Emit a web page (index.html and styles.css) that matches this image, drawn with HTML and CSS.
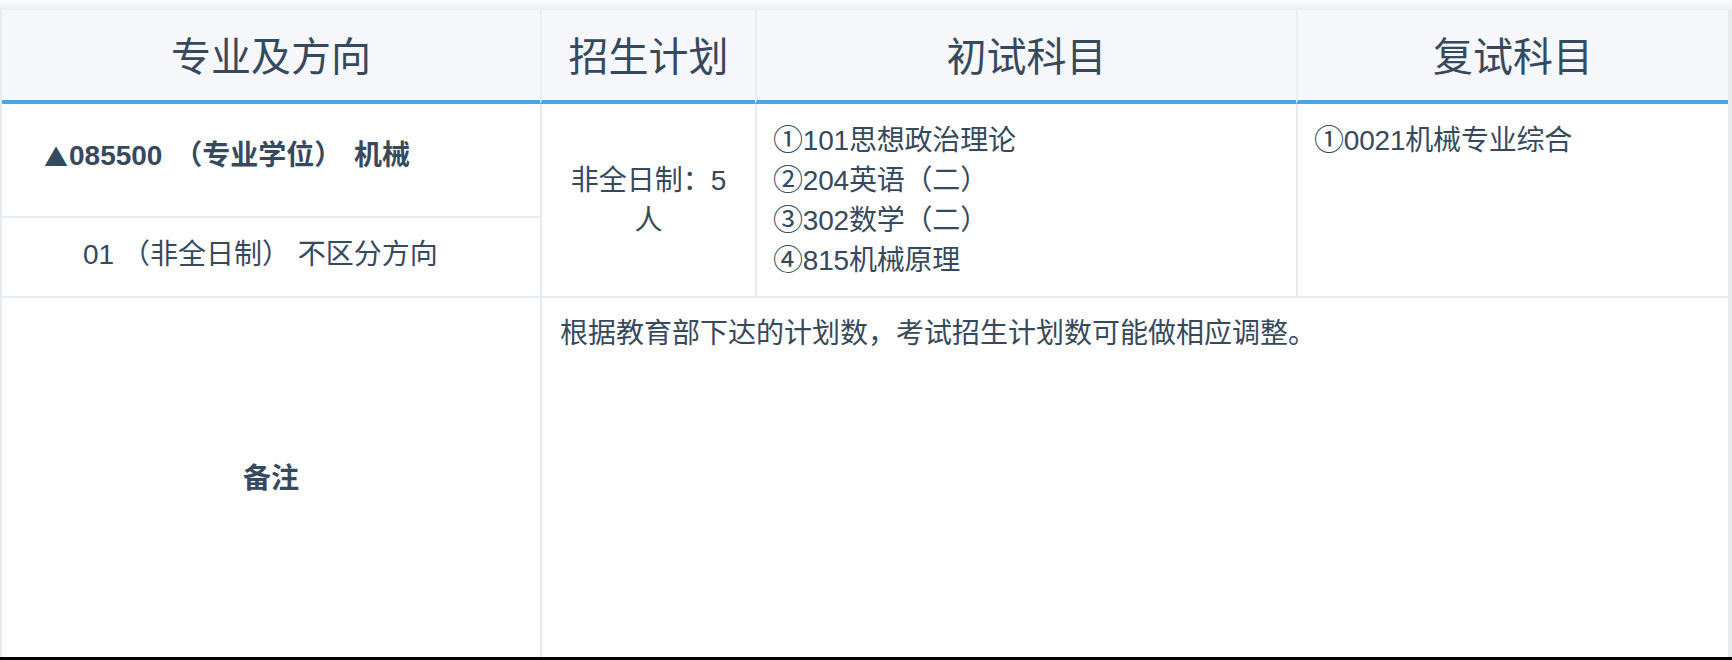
FILE: index.html
```html
<!DOCTYPE html>
<html lang="zh-CN">
<head>
<meta charset="utf-8">
<title>招生专业目录</title>
<link rel="stylesheet" href="styles.css">
</head>
<body>
<div class="page">
  <div class="top-shadow"></div>
  <div class="table">
    <div class="th">专业及方向</div>
    <div class="th">招生计划</div>
    <div class="th">初试科目</div>
    <div class="th">复试科目</div>

    <div class="td major">
      <div class="major-name"><span class="tri">▲</span>085500 （专业学位） 机械</div>
      <div class="major-dir">01 （非全日制） 不区分方向</div>
    </div>
    <div class="td plan">非全日制：5人</div>
    <div class="td subjects">
      <div><span class="circ">①</span>101思想政治理论</div>
      <div><span class="circ">②</span>204英语（二）</div>
      <div><span class="circ">③</span>302数学（二）</div>
      <div><span class="circ">④</span>815机械原理</div>
    </div>
    <div class="td subjects">
      <div><span class="circ">①</span>0021机械专业综合</div>
    </div>

    <div class="td note-label">备注</div>
    <div class="td note-text">根据教育部下达的计划数，考试招生计划数可能做相应调整。</div>
  </div>
  <div class="bottom-edge"></div>
</div>
</body>
</html>
```

FILE: styles.css
```css
html, body {
  margin: 0;
  padding: 0;
  background: #ffffff;
}

.page {
  width: 1732px;
  height: 660px;
  display: flex;
  flex-direction: column;
  font-family: "Liberation Sans", "Noto Sans CJK SC", sans-serif;
  color: #36495d;
  overflow: hidden;
}

.top-shadow {
  height: 10px;
  flex: none;
  background: linear-gradient(#fcfcfc, #f4f5f6 50%, #eceef0);
}

.table {
  flex: 1;
  display: grid;
  grid-template-columns: 538px 215px 541px 1fr;
  grid-template-rows: 94px 194px 1fr;
  border-left: 2px solid #e7ecf0;
  border-right: 4px solid #e7eaed;
}

.th {
  box-sizing: border-box;
  background: #f5f7fb;
  border-bottom: 4px solid #4aa5e2;
  border-left: 2px solid #e9eef3;
  display: flex;
  align-items: center;
  justify-content: center;
  font-size: 40px;
  font-family: "Noto Sans CJK SC", sans-serif;
  font-weight: 400;
  padding-bottom: 2px;
}

.th:first-child {
  border-left: none;
}

.td {
  box-sizing: border-box;
  border-left: 2px solid #e7ecf0;
  border-bottom: 2px solid #e7ecf0;
  font-size: 28px;
  line-height: 40px;
}

.major {
  border-left: none;
  display: flex;
  flex-direction: column;
}

.major-name {
  flex: 1;
  display: flex;
  align-items: center;
  padding-left: 42px;
  padding-bottom: 8px;
  font-weight: 700;
  word-spacing: 4px;
  border-bottom: 2px solid #e7ecf0;
}

.tri {
  font-family: "Noto Sans CJK SC", sans-serif;
  font-size: 24px;
  margin-right: 1px;
}

.major-dir {
  height: 78px;
  display: flex;
  align-items: center;
  padding-left: 81px;
  padding-bottom: 4px;
  box-sizing: border-box;
}

.plan {
  display: flex;
  align-items: center;
  justify-content: center;
  text-align: center;
  padding: 2px 24px 0;
}

.subjects {
  padding: 17px 16px;
  letter-spacing: -0.2px;
}

.circ {
  font-family: "Noto Sans CJK SC", sans-serif;
  font-size: 30px;
  line-height: 1;
}

.note-label {
  border-left: none;
  border-bottom: none;
  display: flex;
  align-items: center;
  justify-content: center;
  font-weight: 700;
  padding-top: 2px;
}

.note-text {
  grid-column: 2 / 5;
  border-bottom: none;
  padding: 16px 18px;
}

.bottom-edge {
  height: 3px;
  flex: none;
  background: #000000;
}
```
